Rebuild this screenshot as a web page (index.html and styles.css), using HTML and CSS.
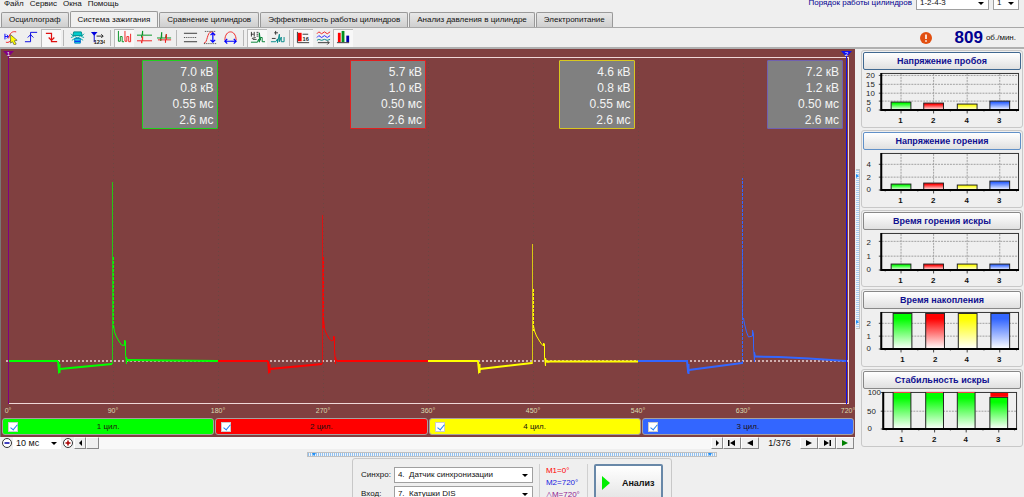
FILE: index.html
```html
<!DOCTYPE html>
<html lang="ru">
<head>
<meta charset="utf-8">
<title>Осциллограф</title>
<link rel="stylesheet" href="styles.css">
</head>
<body>
<header class="top">
  <div class="top-left">
    <nav class="menu">
      <button>Файл</button><button>Сервис</button><button>Окна</button><button>Помощь</button>
    </nav>
    <div class="tabs" role="tablist">
      <button class="tab" role="tab">Осциллограф</button>
      <button class="tab active" role="tab" aria-selected="true">Система зажигания</button>
      <button class="tab" role="tab">Сравнение цилиндров</button>
      <button class="tab" role="tab">Эффективность работы цилиндров</button>
      <button class="tab" role="tab">Анализ давления в цилиндре</button>
      <button class="tab" role="tab">Электропитание</button>
    </div>
  </div>
  <div class="order">
    <label for="order">Порядок работы цилиндров</label>
    <span class="combo order-list"><select id="order"><option>1-2-4-3</option></select></span>
    <span class="combo order-num"><select aria-label="Номер цилиндра"><option>1</option></select></span>
  </div>
</header>

<div class="toolbar">
  <button class="tool" aria-label="Курсор"><svg viewBox="0 0 16 16"><path d="M1 4v6M1 7h4M3 5l2 2-2 2" stroke="#00f"/><path d="M5 9C6 3 9 1 13 2M2 13c3 1 6-1 7-6" stroke="#f02020"/><path d="M7 5l7 6-3 .5 2 3.500-2 1-2-3.500-2 1.500z" fill="#ff0" stroke="#333" stroke-width=".6"/></svg></button>
  <button class="tool" aria-label="Фронт"><svg viewBox="0 0 16 16"><path d="M1 12.500h6v-10h7M4 8l3-3 3 3" stroke="#0000e0"/></svg></button>
  <button class="tool on" aria-label="Спад"><svg viewBox="0 0 16 16"><path d="M2 3.500h6v9h6M5 8l3 3 3-3" stroke="#e01010" stroke-width="1.300"/></svg></button>
  <i class="sep"></i>
  <button class="tool" aria-label="Автомобиль"><svg viewBox="0 0 16 16"><path d="M4 2h8l1 4H3z" fill="#0cc" stroke="#088"/><path d="M1 4l3 3M15 4l-3 3M1 8l3-1M15 8l-3-1M5 7l6 3M11 7l-6 3M2 11l3-2M14 11l-3-2" stroke="#0aa"/><path d="M5 9h6v5H5z" fill="#20d0e8" stroke="#0080c0"/><path d="M5 12h6" stroke="#00f"/></svg></button>
  <button class="tool" aria-label="Счётчик"><svg viewBox="0 0 16 16"><path d="M1 2h7L4.500 6z" fill="#00d"/><path d="M4.500 2v11" stroke="#00d"/><path d="M7 6.500h7M12 4.500l2 2-2 2" stroke="#222"/><text x="4" y="15" class="tool-text">1234</text></svg></button>
  <i class="sep"></i>
  <button class="tool on" aria-label="Последовательно"><svg viewBox="0 0 16 16"><path d="M1.500 1v11h2V7h2v5.500h2" stroke="#009020"/><path d="M8.500 1v11h2V7h2v5.500h2V4" stroke="#f02020"/></svg></button>
  <button class="tool" aria-label="Друг под другом"><svg viewBox="0 0 16 16"><path d="M0 5.500h5V8l1-7v4.500h10" stroke="#009020"/><path d="M0 11.500h5V14l1-7v4.500h10" stroke="#f02020"/></svg></button>
  <button class="tool" aria-label="Наложение"><svg viewBox="0 0 16 16"><path d="M0 8.500h4v3l1-9v6h4l1-4v4h5" stroke="#009020"/><path d="M1 10.500h8v3l1-9v6h5" stroke="#f02020"/></svg></button>
  <i class="sep"></i>
  <button class="tool" aria-label="Линии"><svg viewBox="0 0 16 16"><path d="M1 3.500h14M1 12.500h14" stroke="#333"/><path d="M1 8h14" stroke="#333" stroke-dasharray="1 1"/></svg></button>
  <button class="tool" aria-label="Высота"><svg viewBox="0 0 16 16"><path d="M1 14c4 0 3-12 8-12 2 0 3 2 3 4" stroke="#f02020"/><path d="M2 1.500h12M1 14.500h13" stroke="#333" stroke-dasharray="1 1"/><path d="M10.500 3v10M8 5.500 10.500 3 13 5.500M8 10.500l2.500 2.500 2.500-2.500" stroke="#00f" stroke-width="1.300"/></svg></button>
  <button class="tool" aria-label="Ширина"><svg viewBox="0 0 16 16"><path d="M2 11C2 5 5 2 8 2s6 3 6 9" stroke="#f02020"/><path d="M2 12h12M4.500 9.500 2 12l2.500 2.500M11.500 9.500 14 12l-2.500 2.500" stroke="#00f" stroke-width="1.300"/></svg></button>
  <i class="sep"></i>
  <button class="tool on" aria-label="Подписи"><svg viewBox="0 0 16 16"><path d="M1.500 2v5M4.500 2v5M7 2.500h2M7 4.500h2M7 6.500h2M1 4.500h3M2 9l4-1M3 10h4" stroke="#333"/><path d="M1 13h7l1-3 1 3V3l1 8V8h2v4.500h3" stroke="#008030"/></svg></button>
  <button class="tool" aria-label="Значения"><svg viewBox="0 0 16 16"><path d="M6 1v4M4.500 3h4M2 9h4" stroke="#333"/><path d="M1 12.500h5l2-3v4l2-9v8l2-5v5h3v-5" stroke="#088"/></svg></button>
  <i class="sep"></i>
  <button class="tool on" aria-label="Таблица"><svg viewBox="0 0 16 16"><path d="M2 3h4v9H2z" fill="#f00"/><path d="M1.500 2v11.500H14M7 4.500h6" stroke="#333"/><text x="7" y="12" class="tool-text">16</text></svg></button>
  <button class="tool" aria-label="Осциллограммы"><svg viewBox="0 0 16 16"><path d="M1 4l2-2 3 2 3-2 3 2 3-2" stroke="#f02020"/><path d="M1 8l2-2 3 2 3-2 3 2 3-2" stroke="#22f"/><path d="M1 11l2-1 3 1 3-1 3 1 3-1" stroke="#088"/><path d="M2 13.500h12M12 11.500l2 2-2 2" stroke="#333"/></svg></button>
  <button class="tool on" aria-label="Гистограммы"><svg viewBox="0 0 16 16"><path d="M2 3h3v10H2z" fill="#f00"/><path d="M6 1h3v12H6z" fill="#009020"/><path d="M11 6h3v7h-3z" fill="#00a"/><path d="M1 13.500h13" stroke="#333"/></svg></button>
  <div class="rpm">
    <svg class="alert" viewBox="0 0 12 12"><circle cx="6" cy="6" r="6" fill="#e24f10"/><path d="M6 2.500v4.500M6 8.200v1.600" stroke="#fff" stroke-width="1.600"/></svg>
    <strong>809</strong><span>об./мин.</span>
  </div>
</div>

<main class="main">
  <section class="left">
    <div class="scope">
      <div class="plot">
        <svg class="wave" viewBox="1 0 854 357" preserveAspectRatio="none">
          <path class="grid" d="M113.500 10v344M218.500 10v344M323.500 10v344M428.500 10v344M533.500 10v344M638.500 10v344M743.500 10v344"/>
          <path class="frame" d="M8 8.500h841M8 354.500h841M848.500 8v347"/>
          <path class="zero" d="M6 312h843"/>
          <g class="ch1">
            <path class="thin" d="M112.500 315V133"/><path class="dash" d="M113.500 208v72"/>
            <path class="flat" d="M8 312h50"/><path class="dwell" d="M58 312l1 10 1-2 52-5"/><path class="drop" d="M59.500 315v9"/>
            <path d="M113.500 276l1 7 2 5 3 5 2 3 3 .5V291l1 1v13l1 10v-7l1 4h3"/><path class="flat" d="M127 311l40 .5 51 .5"/>
          </g>
          <g class="ch2">
            <path class="thin" d="M322.500 315V166"/><path class="dash" d="M323.500 208v72"/>
            <path class="flat" d="M218 312h50"/><path class="dwell" d="M268 312l1 10 1-2 52-5"/><path class="drop" d="M269.500 315v9"/>
            <path d="M323.500 270l1 10 2 5 3 5 2 2 2-1V287l1 1v13l1 14v-7l1 4h3"/><path class="flat" d="M337 312h91"/>
          </g>
          <g class="ch3">
            <path class="thin" d="M532.500 315V195"/><path class="dash" d="M533.500 240v42"/>
            <path class="flat" d="M428 312h50"/><path class="dwell" d="M478 312l1 10 1-2 52-6"/><path class="drop" d="M479.500 315v9"/>
            <path d="M533.500 277l1 5 2 5 3 5 2 3 2 2V294l1 1v13l1 9v-8l1 4h3"/><path class="flat" d="M545 312.500h93"/>
          </g>
          <g class="ch4">
            <path class="dash" d="M742.500 315V129"/><path class="thin" d="M742.500 201v70"/>
            <path class="flat" d="M638 312h50"/><path class="dwell" d="M687 312l1 10 1-1 53-7"/><path class="drop" d="M688.500 315v10"/>
            <path d="M743.500 269l1 6 2 8 2 5 4-1V281l1 4v13l1 15v-10l1 5"/><path class="flat" d="M754 307.500l25 .5 30 1.500 37 2.500"/>
          </g>
          <path class="cur1" d="M8.500 4v351"/><path class="cur2" d="M846.500 4v351"/>
          <path class="mark1" d="M3 2h11l-5.500 6z"/><path class="mark2" d="M841 2h11l-5.500 6z"/>
          <text class="mark" x="8.500" y="7">1</text><text class="mark" x="846.500" y="7">2</text>
        </svg>
        <div class="readouts">
          <div class="readout r1">7.0 кВ<br>0.8 кВ<br>0.55 мс<br>2.6 мс</div>
          <div class="readout r2">5.7 кВ<br>1.0 кВ<br>0.50 мс<br>2.6 мс</div>
          <div class="readout r3">4.6 кВ<br>0.8 кВ<br>0.55 мс<br>2.6 мс</div>
          <div class="readout r4">7.2 кВ<br>1.2 кВ<br>0.50 мс<br>2.6 мс</div>
        </div>
      </div>
      <div class="axis"><span>0°</span><span>90°</span><span>180°</span><span>270°</span><span>360°</span><span>450°</span><span>540°</span><span>630°</span><span>720°</span></div>
      <div class="channels">
        <label class="channel c1"><input type="checkbox" checked><span>1 цил.</span></label>
        <label class="channel c2"><input type="checkbox" checked><span>2 цил.</span></label>
        <label class="channel c3"><input type="checkbox" checked><span>4 цил.</span></label>
        <label class="channel c4"><input type="checkbox" checked><span>3 цил.</span></label>
      </div>
    </div>
    <div class="player">
      <button class="zoom" aria-label="Уменьшить"><svg viewBox="0 0 12 12"><circle cx="6" cy="6" r="4.500" fill="#fff" stroke="#333"/><path d="M3.500 6h5" stroke="#00a" stroke-width="1.500"/></svg></button>
      <span class="combo time"><select aria-label="Масштаб"><option>10 мс</option></select></span>
      <button class="zoom" aria-label="Увеличить"><svg viewBox="0 0 12 12"><circle cx="6" cy="6" r="4.500" fill="#fff" stroke="#333"/><path d="M3.500 6h5M6 3.500v5" stroke="#a00" stroke-width="1.500"/></svg></button>
      <button class="raised small" aria-label="Влево"><svg viewBox="0 0 12 12"><path d="M8 3v6L5 6z"/></svg></button>
      <div class="track"><div class="thumb"></div></div>
      <button class="raised small" aria-label="Вправо"><svg viewBox="0 0 12 12"><path d="M5 3v6l3-3z"/></svg></button>
      <button class="raised" aria-label="В начало"><svg viewBox="0 0 12 12"><path d="M2 3h1.500v6H2zM9 3v6L4 6z"/></svg></button>
      <button class="raised" aria-label="Назад"><svg viewBox="0 0 12 12"><path d="M9 3v6L3 6z"/></svg></button>
      <output class="frame-no">1/376</output>
      <button class="raised" aria-label="Вперёд"><svg viewBox="0 0 12 12"><path d="M3 3v6l6-3z"/></svg></button>
      <button class="raised" aria-label="В конец"><svg viewBox="0 0 12 12"><path d="M3 3v6l5-3zM8.500 3H10v6H8.500z"/></svg></button>
      <button class="raised" aria-label="Пуск"><svg viewBox="0 0 12 12"><path d="M3 3v6l6-3z" fill="#008000"/></svg></button>
    </div>
  </section>

  <div class="vsplit"><div class="vgrip"><i></i><i></i></div></div>

  <aside class="side">
    <svg class="defs" width="0" height="0" aria-hidden="true"><defs>
      <linearGradient id="g1" x2="0" y2="1"><stop stop-color="#0f0"/><stop offset=".15" stop-color="#0f0"/><stop offset="1" stop-color="#fff"/></linearGradient>
      <linearGradient id="g2" x2="0" y2="1"><stop stop-color="#f00"/><stop offset=".15" stop-color="#f00"/><stop offset="1" stop-color="#fff"/></linearGradient>
      <linearGradient id="g3" x2="0" y2="1"><stop stop-color="#ff0"/><stop offset=".15" stop-color="#ff0"/><stop offset="1" stop-color="#fff"/></linearGradient>
      <linearGradient id="g4" x2="0" y2="1"><stop stop-color="#36f"/><stop offset=".15" stop-color="#36f"/><stop offset="1" stop-color="#fff"/></linearGradient>
    </defs></svg>
    <section class="gauge">
      <button class="title focus">Напряжение пробоя</button>
      <svg class="bars" viewBox="0 0 160 56">
        <path class="gl" d="M19 5.500h139M19 14.500h139M19 23.500h139M19 31.500h139M38.500 4v36M71.500 4v36M105.500 4v36M138.500 4v36"/>
        <path class="tick" d="M16 5.500h3M16 14.500h3M16 23.500h3M16 31.500h3M16 40.500h3M38.500 40v4M71.500 40v4M105.500 40v4M138.500 40v4M22.500 40v2M55.500 40v2M88.500 40v2M122.500 40v2M155.500 40v2"/>
        <rect class="bar" x="28.500" y="32.500" width="20" height="8" fill="url(#g1)"/><rect class="bar" x="61.500" y="33.500" width="20" height="7" fill="url(#g2)"/><rect class="bar" x="95.500" y="34.500" width="20" height="6" fill="url(#g3)"/><rect class="bar" x="128.500" y="31.500" width="20" height="9" fill="url(#g4)"/>
        <rect class="box" x="18.500" y="3.500" width="139" height="37"/><path class="edge" d="M18.500 3v37.500H158"/>
        <g class="yl"><text x="12" y="8">20</text><text x="12" y="17">15</text><text x="12" y="26">10</text><text x="8" y="35">5</text><text x="8" y="43">0</text></g>
        <g class="xl"><text x="38" y="54">1</text><text x="71" y="54">2</text><text x="105" y="54">4</text><text x="138" y="54">3</text></g>
      </svg>
    </section>
    <section class="gauge">
      <button class="title hot">Напряжение горения</button>
      <svg class="bars" viewBox="0 0 160 56">
        <path class="gl" d="M19 14.500h139M19 27.500h139M38.500 4v36M71.500 4v36M105.500 4v36M138.500 4v36"/>
        <path class="tick" d="M16 14.500h3M16 27.500h3M16 40.500h3M38.500 40v4M71.500 40v4M105.500 40v4M138.500 40v4M22.500 40v2M55.500 40v2M88.500 40v2M122.500 40v2M155.500 40v2"/>
        <rect class="bar" x="28.500" y="34.500" width="20" height="6" fill="url(#g1)"/><rect class="bar" x="61.500" y="33.500" width="20" height="7" fill="url(#g2)"/><rect class="bar" x="95.500" y="35.500" width="20" height="5" fill="url(#g3)"/><rect class="bar" x="128.500" y="31.500" width="20" height="9" fill="url(#g4)"/>
        <rect class="box" x="18.500" y="3.500" width="139" height="37"/><path class="edge" d="M18.500 3v37.500H158"/>
        <g class="yl"><text x="8" y="17">4</text><text x="8" y="30">2</text><text x="8" y="43">0</text></g>
        <g class="xl"><text x="38" y="54">1</text><text x="71" y="54">2</text><text x="105" y="54">4</text><text x="138" y="54">3</text></g>
      </svg>
    </section>
    <section class="gauge">
      <button class="title">Время горения искры</button>
      <svg class="bars" viewBox="0 0 160 56">
        <path class="gl" d="M19 11.500h139M19 26.500h139M38.500 4v36M71.500 4v36M105.500 4v36M138.500 4v36"/>
        <path class="tick" d="M16 11.500h3M16 26.500h3M16 40.500h3M38.500 40v4M71.500 40v4M105.500 40v4M138.500 40v4M22.500 40v2M55.500 40v2M88.500 40v2M122.500 40v2M155.500 40v2"/>
        <rect class="bar" x="28.500" y="34.500" width="20" height="6" fill="url(#g1)"/><rect class="bar" x="61.500" y="34.500" width="20" height="6" fill="url(#g2)"/><rect class="bar" x="95.500" y="34.500" width="20" height="6" fill="url(#g3)"/><rect class="bar" x="128.500" y="34.500" width="20" height="6" fill="url(#g4)"/>
        <rect class="box" x="18.500" y="3.500" width="139" height="37"/><path class="edge" d="M18.500 3v37.500H158"/>
        <g class="yl"><text x="8" y="15">2</text><text x="8" y="29">1</text><text x="8" y="43">0</text></g>
        <g class="xl"><text x="38" y="54">1</text><text x="71" y="54">2</text><text x="105" y="54">4</text><text x="138" y="54">3</text></g>
      </svg>
    </section>
    <section class="gauge">
      <button class="title">Время накопления</button>
      <svg class="bars" viewBox="0 0 160 56">
        <path class="gl" d="M19 14.500h139M19 27.500h139M38.500 4v36M71.500 4v36M105.500 4v36M138.500 4v36"/>
        <path class="tick" d="M16 14.500h3M16 27.500h3M16 40.500h3M38.500 40v4M71.500 40v4M105.500 40v4M138.500 40v4M22.500 40v2M55.500 40v2M88.500 40v2M122.500 40v2M155.500 40v2"/>
        <rect class="bar" x="30.500" y="4.500" width="19" height="36" fill="url(#g1)"/><rect class="bar" x="63.500" y="4.500" width="19" height="36" fill="url(#g2)"/><rect class="bar" x="96.500" y="4.500" width="19" height="36" fill="url(#g3)"/><rect class="bar" x="129.500" y="4.500" width="19" height="36" fill="url(#g4)"/>
        <rect class="box" x="18.500" y="3.500" width="139" height="37"/><path class="edge" d="M18.500 3v37.500H158"/>
        <g class="yl"><text x="8" y="17">2</text><text x="8" y="30">1</text><text x="8" y="43">0</text></g>
        <g class="xl"><text x="40" y="54">1</text><text x="73" y="54">2</text><text x="105" y="54">4</text><text x="138" y="54">3</text></g>
      </svg>
    </section>
    <section class="gauge">
      <button class="title">Стабильность искры</button>
      <svg class="bars" viewBox="0 0 160 56">
        <path class="gl" d="M21 22.500h135"/>
        <path class="tick" d="M18 3.500h3M18 22.500h3M18 40.500h3M39.500 40v4M72.500 40v4M104.500 40v4M137.500 40v4M23.500 40v2M56.500 40v2M88.500 40v2M121.500 40v2M153.500 40v2"/>
        <rect class="box" x="20.500" y="3.500" width="135" height="37"/>
        <rect class="bar" x="30.500" y="3.500" width="18" height="37" fill="url(#g1)"/><rect class="bar" x="63.500" y="3.500" width="18" height="37" fill="url(#g1)"/><rect class="bar" x="95.500" y="3.500" width="18" height="37" fill="url(#g1)"/><rect class="bar" x="128.500" y="8.500" width="18" height="32" fill="url(#g1)"/>
        <path d="M31 3.500h17M64 3.500h17M96 3.500h17" stroke="#f44"/><rect x="129" y="4" width="18" height="4" fill="#f00"/>
        <path class="edge" d="M20.500 3v37.500H156"/>
        <g class="yl"><text x="18" y="6">100</text><text x="13" y="25">50</text><text x="9" y="43">0</text></g>
        <g class="xl"><text x="39" y="54">1</text><text x="72" y="54">2</text><text x="104" y="54">4</text><text x="137" y="54">3</text></g>
      </svg>
    </section>
  </aside>
</main>

<footer class="bottom">
  <div class="hgrip"><i></i><i></i></div>
  <div class="panel">
    <div class="inputs">
      <label for="sync">Синхро:</label><span class="combo"><select id="sync"><option>4.&nbsp; Датчик синхронизации</option></select></span>
      <label for="input">Вход:</label><span class="combo"><select id="input"><option>7.&nbsp; Катушки DIS</option></select></span>
    </div>
    <div class="markers"><span class="m1">M1=0°</span><span class="m2">M2=720°</span><span class="dm">△M=720°</span></div>
    <button class="analyze"><svg viewBox="0 0 8 14"><path d="M0 0l8 7-8 7z" fill="#0e0"/></svg>Анализ</button>
  </div>
</footer>
</body>
</html>
```

FILE: styles.css
```css
* { box-sizing: border-box; }
body {
  margin: 0;
  height: 100vh;
  display: flex;
  flex-direction: column;
  overflow: hidden;
  background: #efefef;
  color: #111;
  font: 8px/12px "Liberation Sans", Arial, sans-serif;
}
button, select, input { font: inherit; color: inherit; margin: 0; padding: 0; }
button { border: 0; background: none; white-space: nowrap; }
svg { display: block; fill: none; }

.top {
  flex: none;
  height: 28px;
  display: flex;
  justify-content: space-between;
  overflow: hidden;
  border-bottom: 1px solid #a8a8a8;
}
.top-left { display: flex; flex-direction: column; justify-content: space-between; }
.menu { display: flex; gap: 6px; padding-left: 4px; line-height: 7px; }
.tabs { display: flex; align-items: flex-end; gap: 1px; padding-left: 1px; }
.tab {
  height: 15px;
  padding: 0 7px;
  border: 1px solid #999;
  border-bottom: 0;
  border-radius: 2px 2px 0 0;
  background: linear-gradient(#e8e8e8, #cfcfcf);
}
.tab.active { height: 16px; background: #f0f0f0; }
.order {
  display: flex;
  align-items: center;
  height: 15px;
  margin-top: -5px;
  padding-right: 5px;
  gap: 4px;
  color: #000090;
}

.combo { position: relative; display: block; border: 1px solid #a0a0a0; background: #fff; color: #111; }
.combo select {
  appearance: none;
  display: block;
  width: 100%;
  height: 100%;
  border: 0;
  padding-left: 3px;
  background: transparent;
}
.combo::after {
  content: "";
  position: absolute;
  right: 4px;
  top: 50%;
  margin-top: -1px;
  border: 3px solid transparent;
  border-top-color: #000;
  border-bottom: 0;
  pointer-events: none;
}
.order-list { width: 73px; height: 15px; }
.order-num { width: 26px; height: 15px; }

.toolbar {
  flex: none;
  height: 21px;
  display: flex;
  align-items: center;
  padding-left: 1px;
  border-bottom: 2px solid #b0b0b0;
}
.tool {
  width: 20px;
  height: 18px;
  display: flex;
  align-items: center;
  justify-content: center;
}
.tool svg { width: 15px; height: 15px; }
.tool.on { background: #f8f8f8; box-shadow: inset 1px 1px #bbb; }
.tool-text { font-size: 6px; font-weight: bold; fill: #222; }
.sep { width: 1px; height: 16px; margin: 0 3px 0 2px; background: #b8b8b8; }
.sep:nth-of-type(even) { margin-left: 3px; }
.rpm { margin-left: auto; padding-right: 8px; display: flex; align-items: center; gap: 3px; }
.rpm strong { font-size: 17px; line-height: 18px; color: #000090; }
.alert { width: 12px; height: 12px; margin-right: 20px; }

.main { flex: 1; min-height: 0; display: flex; }
.left { flex: 1; min-width: 0; display: flex; flex-direction: column; }
.scope {
  flex: 1;
  min-height: 0;
  display: flex;
  flex-direction: column;
  border-left: 1px solid #777;
  background: #804040;
}
.plot { flex: 1; min-height: 0; position: relative; }
.wave { position: absolute; width: 100%; height: 100%; }
.grid { stroke: #6a4642; stroke-dasharray: 1 3; }
.frame { stroke: #f0d8d8; }
.zero { stroke: #d0b0b0; stroke-width: 2; stroke-dasharray: 2 2; }
.ch1 { stroke: #0f0; }
.ch2 { stroke: #f00; }
.ch3 { stroke: #ff0; }
.ch4 { stroke: #36f; }
.thin { stroke-opacity: .7; }
.dash { stroke-dasharray: 3 1; }
.flat, .dwell, .drop { stroke-width: 2; }
.cur1 { stroke: #800080; }
.cur2 { stroke: #1010f0; }
.mark1 { fill: #800080; }
.mark2 { fill: #1010f0; }
.mark { font-size: 6px; fill: #fff; text-anchor: middle; }

.readouts {
  position: absolute;
  top: 11px;
  left: 8px;
  right: 12px;
  display: grid;
  grid-template-columns: repeat(4, 1fr);
  justify-items: end;
}
.readout {
  width: 76px;
  padding: 3px 3px 0 0;
  border: 1px solid;
  border-radius: 1px;
  background: #808080;
  font-size: 12px;
  line-height: 16px;
  text-align: right;
  color: #f4f4f4;
}
.r1 { border-color: #20d020; }
.r2 { border-color: #e02020; }
.r3 { border-color: #d8c820; }
.r4 { border-color: #7060b0; }

.axis {
  display: flex;
  justify-content: space-between;
  padding: 0 7px;
  height: 11px;
  font-size: 7px;
  line-height: 10px;
  color: #d8dcb0;
}
.axis span { width: 0; display: flex; justify-content: center; }
.channels { display: grid; grid-template-columns: repeat(4, 1fr); gap: 1px; padding: 1px 1px 2px; }
.channel {
  display: flex;
  align-items: center;
  height: 17px;
  padding: 0 5px;
  border: 1px solid #a8a0a0;
  border-radius: 3px;
  color: #201010;
}
.channel span { flex: 1; text-align: center; padding-right: 10px; }
.channel input {
  appearance: none;
  width: 10px;
  height: 10px;
  border: 1px solid #ccc;
  background: #fff;
}
.channel input:checked::before {
  content: "";
  display: block;
  width: 3px;
  height: 6px;
  margin: 0 0 0 3px;
  border: solid #2080f0;
  border-width: 0 1px 1px 0;
  transform: rotate(40deg);
}
.c1 { background: #0f0; }
.c2 { background: #f00; }
.c3 { background: #ff0; }
.c4 { background: #36f; }

.player { flex: none; height: 12px; display: flex; align-items: stretch; padding: 0 1px; background: #f0f0f0; font-size: 9px; }
.player svg { width: 12px; height: 12px; margin: auto; fill: #000; }
.player .raised svg { margin: -1px auto; }
.player .small svg { margin-left: -1px; }
.zoom { width: 12px; }
.time { width: 48px; border: 0; }
.time + .zoom { width: 13px; }
.raised { width: 18px; border: 1px solid; border-color: #fff #888 #888 #fff; }
.raised.small { width: 12px; }
.track { flex: 1; background: #f8f8f8; }
.thumb { width: 13px; height: 12px; border: 1px solid; border-color: #fff #888 #888 #fff; background: #f0f0f0; }
.frame-no { width: 41px; text-align: center; }

.vsplit { width: 5px; display: flex; align-items: center; }
.vgrip {
  height: 160px;
  width: 4px;
  margin-left: 1px;
  padding: 4px 0;
  display: flex;
  flex-direction: column;
  justify-content: space-between;
  border: 1px solid #c0c0c0;
  border-left: 0;
  background: repeating-linear-gradient(#a8ccf0 0 1px, #f0f4f8 1px 2px);
}
.vgrip i { border: 2px solid transparent; border-left: 3px solid #2090f8; border-right: 0; }

.side {
  width: 164px;
  padding: 1px 1px 2px;
  display: grid;
  grid-template-rows: repeat(5, 1fr);
  row-gap: 2px;
}
.defs { position: absolute; }
.gauge { border: 1px solid #c8c8c8; border-radius: 3px; padding: 1px; min-height: 0; }
.title {
  display: block;
  width: 100%;
  height: 18px;
  border: 1px solid #888;
  border-radius: 2px;
  background: linear-gradient(#fff, #e0e0e0);
  color: #101090;
  font-size: 9px;
  font-weight: bold;
}
.title.focus { border-color: #406890; }
.title.hot { border-color: #6090c8; }
.bars { width: 100%; overflow: visible; }
.gl { stroke: #a0a0a0; stroke-dasharray: 2 1; }
.tick { stroke: #444; }
.bar { stroke: #222; }
.box { stroke: #333; }
.edge { stroke: #000; stroke-width: 2; }
.yl { font-size: 8px; fill: #222; text-anchor: end; }
.xl { font-size: 8px; font-weight: bold; fill: #111; text-anchor: middle; }

.bottom {
  flex: none;
  height: 48px;
  padding-top: 3px;
  display: flex;
  flex-direction: column;
  align-items: center;
  overflow: hidden;
}
.hgrip {
  flex: none;
  width: 40%;
  height: 5px;
  padding: 0 4px;
  display: flex;
  justify-content: space-between;
  border: 1px solid #c0c0c0;
  background: repeating-linear-gradient(90deg, #90c0f0 0 1px, #f0f4f8 1px 2px);
}
.hgrip i { border: 2px solid transparent; border-top: 3px solid #2090f8; border-bottom: 0; }
.panel {
  flex: none;
  display: flex;
  gap: 6px;
  margin-top: 1px;
  padding: 5px 8px;
  border: 1px solid #c8c8c8;
  border-radius: 3px;
}
.inputs { display: grid; grid-template-columns: auto 139px; gap: 2px 3px; padding-top: 3px; align-items: center; }
.inputs .combo { height: 16px; }
.markers {
  width: 49px;
  padding: 1px 0 0 6px;
  display: flex;
  flex-direction: column;
  border: solid #d0d0d0;
  border-width: 0 1px;
}
.m1 { color: #f00; }
.m2 { color: #2020e0; }
.dm { color: #902090; }
.analyze {
  width: 69px;
  height: 38px;
  display: flex;
  align-items: center;
  gap: 12px;
  padding-left: 6px;
  border: 2px solid #6888a8;
  border-radius: 2px;
  background: linear-gradient(#fff, #e4e4e4);
  font-size: 9px;
  font-weight: bold;
}
.analyze svg { width: 8px; height: 14px; }
```
